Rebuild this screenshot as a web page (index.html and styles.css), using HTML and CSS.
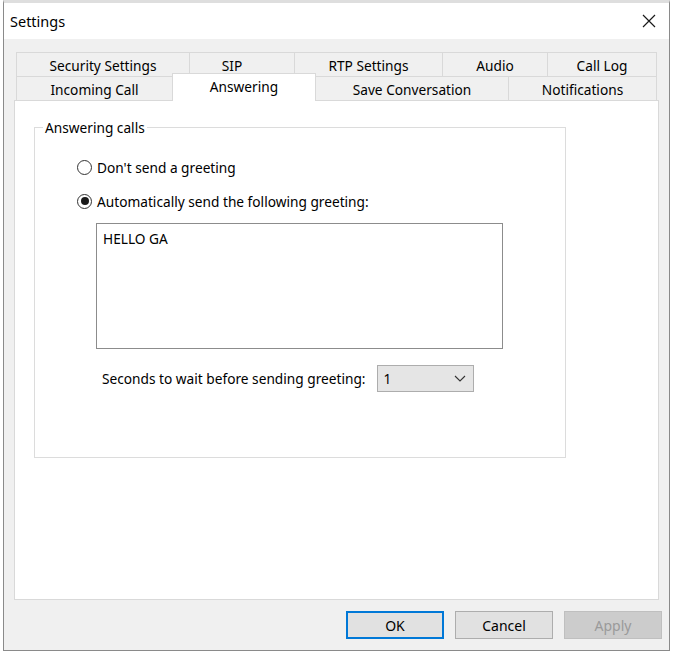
FILE: index.html
```html
<!DOCTYPE html>
<html lang="en">
<head>
    <meta charset="UTF-8">
    <title>Settings</title>
    <link rel="stylesheet" href="styles.css">
</head>
<body>
    <div class="window">
        <div class="titlebar">
            <span class="title">Settings</span>
            <svg class="close" width="14" height="14" viewBox="0 0 14 14">
                <path d="M1 1 L13 13 M13 1 L1 13" stroke="#1a1a1a" stroke-width="1.2" fill="none"/>
            </svg>
        </div>

        <div class="body">
            <!-- two rows of tabs, the selected row sits next to the page -->
            <div class="tabs">
                <div class="tab-row">
                    <div class="tab tab-security">Security Settings</div>
                    <div class="tab tab-sip">SIP</div>
                    <div class="tab tab-rtp">RTP Settings</div>
                    <div class="tab tab-audio">Audio</div>
                    <div class="tab tab-log">Call Log</div>
                </div>
                <div class="tab-row">
                    <div class="tab tab-incoming">Incoming Call</div>
                    <div class="tab tab-answering active">Answering</div>
                    <div class="tab tab-save">Save Conversation</div>
                    <div class="tab tab-notify">Notifications</div>
                </div>
            </div>

            <div class="panel">
                <fieldset class="group">
                    <legend>Answering calls</legend>
                    <div class="radio">
                        <span class="radio-mark"></span>
                        <span>Don't send a greeting</span>
                    </div>
                    <div class="radio">
                        <span class="radio-mark checked"></span>
                        <span>Automatically send the following greeting:</span>
                    </div>
                    <div class="greeting">HELLO GA</div>
                    <div class="wait-row">
                        <span>Seconds to wait before sending greeting:</span>
                        <div class="combo">
                            <span>1</span>
                            <svg width="12" height="7" viewBox="0 0 12 7">
                                <path d="M1 1 L6 6 L11 1" stroke="#333" stroke-width="1.1" fill="none"/>
                            </svg>
                        </div>
                    </div>
                </fieldset>
            </div>

            <div class="buttons">
                <button class="btn default">OK</button>
                <button class="btn">Cancel</button>
                <button class="btn disabled">Apply</button>
            </div>
        </div>
    </div>
</body>
</html>
```

FILE: styles.css
```css
body {
    margin: 0;
    background-color: #ffffff;
    font-family: "Noto Sans", "Liberation Sans", sans-serif;
    font-size: 13.7px;
    color: #000;
}
.window {
    width: 665px;
    margin: 0 0 0 3px;
    border: 1px solid #8a8a8a;
    border-top: 3px solid #dedede;
    background-color: #f0f0f0;
}
.titlebar {
    height: 36px;
    background-color: #ffffff;
    display: flex;
    align-items: center;
    justify-content: space-between;
    padding: 0 13px 0 6px;
}
.title {
    font-size: 14.5px;
}
.body {
    padding: 13px 0 11px 0;
}
.tabs {
    margin-left: 12px;
    width: 641px;
}
.tab-row {
    display: flex;
    height: 24px;
}
.tab {
    box-sizing: border-box;
    height: 24px;
    border: 1px solid #d9d9d9;
    border-bottom: none;
    margin-right: -1px;
    display: flex;
    align-items: center;
    justify-content: center;
    padding-top: 2px;
    background-color: #f0f0f0;
}
.tab-security { width: 174px; }
.tab-sip { width: 106px; padding-right: 20px; }
.tab-rtp { width: 149px; }
.tab-audio { width: 106px; }
.tab-log { width: 110px; }
.tab-incoming { width: 157px; }
.tab-answering { width: 144px; }
.tab-save { width: 194px; }
.tab-notify { width: 149px; }
.tab.active {
    background-color: #ffffff;
    height: 28px;
    margin-top: -3px;
    padding-top: 0;
    padding-bottom: 2px;
    position: relative;
    z-index: 1;
}
.panel {
    box-sizing: border-box;
    width: 645px;
    height: 500px;
    margin-left: 10px;
    background-color: #ffffff;
    border: 1px solid #d9d9d9;
    padding: 17px 0 0 19px;
}
.group {
    box-sizing: border-box;
    width: 532px;
    height: 340px;
    margin: 0;
    border: 1px solid #dcdcdc;
    padding: 20px 0 0 42px;
}
.group legend {
    padding: 0 2px;
    margin-left: -34px;
}
.radio {
    display: flex;
    align-items: center;
    gap: 5px;
    height: 20px;
    margin-bottom: 14px;
}
.radio-mark {
    box-sizing: border-box;
    width: 15px;
    height: 15px;
    border: 1px solid #333;
    border-radius: 50%;
    background-color: #fff;
    display: flex;
    align-items: center;
    justify-content: center;
}
.radio-mark.checked::after {
    content: "";
    width: 8px;
    height: 8px;
    border-radius: 50%;
    background-color: #1a1a1a;
}
.greeting {
    box-sizing: border-box;
    width: 407px;
    height: 126px;
    margin: -2px 0 0 19px;
    border: 1px solid #8c8c8c;
    padding: 5px 6px;
}
.wait-row {
    display: flex;
    align-items: center;
    gap: 11px;
    margin: 16px 0 0 25px;
}
.combo {
    box-sizing: border-box;
    width: 97px;
    height: 27px;
    border: 1px solid #adadad;
    background-color: #e5e5e5;
    display: flex;
    align-items: center;
    justify-content: space-between;
    padding: 0 7px 0 6px;
}
.buttons {
    display: flex;
    justify-content: flex-end;
    gap: 11px;
    margin-top: 11px;
    padding-right: 7px;
}
.btn {
    box-sizing: border-box;
    width: 98px;
    height: 28px;
    font-family: inherit;
    font-size: 14px;
    color: #000;
    background-color: #e1e1e1;
    border: 1px solid #adadad;
    padding: 1px 0 0 0;
}
.btn.default {
    border: 2px solid #0078d7;
}
.btn.disabled {
    background-color: #cccccc;
    border-color: #bfbfbf;
    color: #9a9a9a;
}
```
